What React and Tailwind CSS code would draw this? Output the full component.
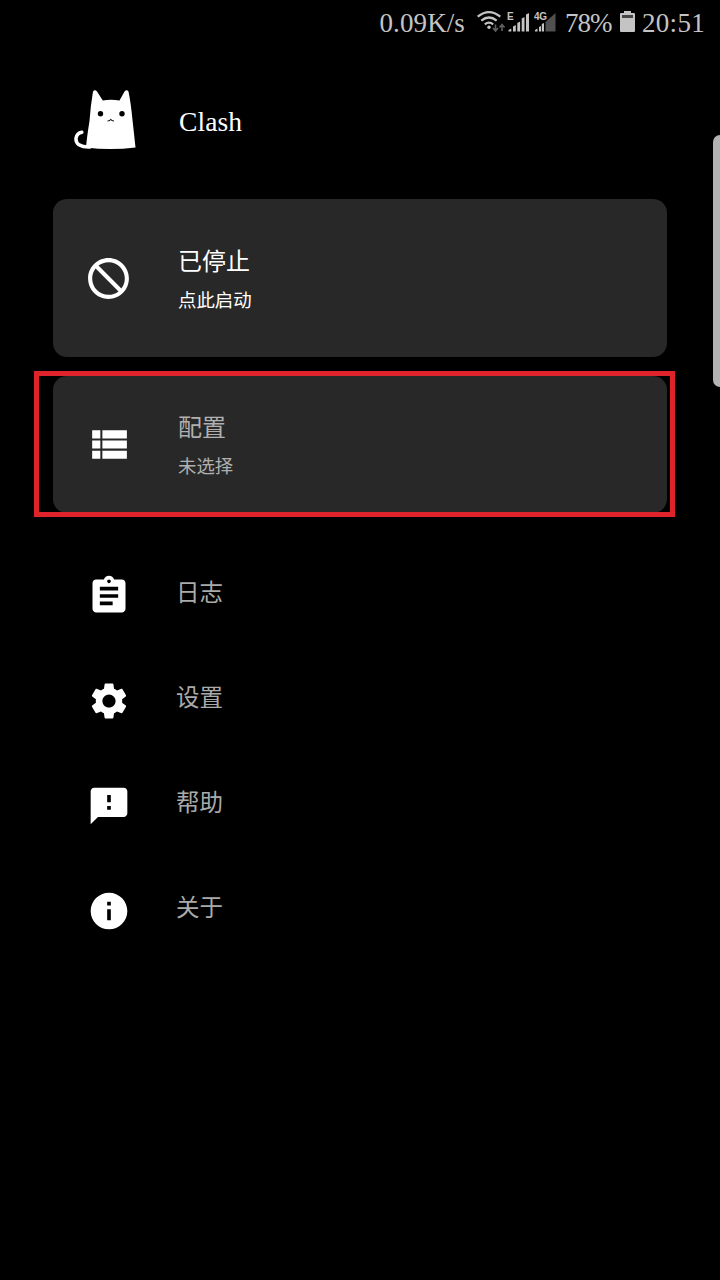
import React from 'react';

const SERIF = "font-['Liberation_Serif','Noto_Sans_CJK_SC',serif]";

function Icon({ d, className }) {
  return (
    <svg viewBox="0 0 24 24" fill="currentColor" fillRule="evenodd" className={className}>
      <path d={d} />
    </svg>
  );
}

const ICONS = {
  block: 'M12 2C6.48 2 2 6.48 2 12s4.48 10 10 10 10-4.48 10-10S17.52 2 12 2zM20 12c0-4.42-3.58-8-8-8-1.85 0-3.55.63-4.9 1.69L18.31 16.9C19.37 15.55 20 13.85 20 12zm-8 8c1.85 0 3.55-.63 4.9-1.69L5.69 7.1C4.63 8.45 4 10.15 4 12c0 4.42 3.58 8 8 8z',
  list: 'M4 14h4v-4H4v4zm0 5h4v-4H4v4zM4 9h4V5H4v4zm5 5h12v-4H9v4zm0 5h12v-4H9v4zM9 5v4h12V5H9z',
  logs: 'M19 3h-4.18C14.4 1.84 13.3 1 12 1c-1.3 0-2.4.84-2.82 2H5c-1.1 0-2 .9-2 2v14c0 1.1.9 2 2 2h14c1.1 0 2-.9 2-2V5c0-1.1-.9-2-2-2zm-7 0c.55 0 1 .45 1 1s-.45 1-1 1-1-.45-1-1 .45-1 1-1zm2 14H7v-2h7v2zm3-4H7v-2h10v2zm0-4H7V7h10v2z',
  settings: 'M19.14 12.94c.04-.3.06-.61.06-.94 0-.32-.02-.64-.07-.94l2.03-1.58c.18-.14.23-.41.12-.61l-1.92-3.32c-.12-.22-.37-.29-.59-.22l-2.39.96c-.5-.38-1.03-.7-1.62-.94l-.36-2.54c-.04-.24-.24-.41-.48-.41h-3.84c-.24 0-.43.17-.47.41l-.36 2.54c-.59.24-1.13.57-1.62.94l-2.39-.96c-.22-.08-.47 0-.59.22L2.74 8.87c-.12.21-.08.47.12.61l2.03 1.58c-.05.3-.09.63-.09.94s.02.64.07.94l-2.03 1.58c-.18.14-.23.41-.12.61l1.92 3.32c.12.22.37.29.59.22l2.39-.96c.5.38 1.03.7 1.62.94l.36 2.54c.05.24.24.41.48.41h3.84c.24 0 .44-.17.47-.41l.36-2.54c.59-.24 1.13-.56 1.62-.94l2.39.96c.22.08.47 0 .59-.22l1.92-3.32c.12-.22.07-.47-.12-.61l-2.01-1.58zM12 15.6c-1.98 0-3.6-1.62-3.6-3.6s1.62-3.6 3.6-3.6 3.6 1.62 3.6 3.6-1.62 3.6-3.6 3.6z',
  help: 'M20 2H4c-1.1 0-1.99.9-1.99 2L2 22l4-4h14c1.1 0 2-.9 2-2V4c0-1.1-.9-2-2-2zm-7 12h-2v-2h2v2zm0-4h-2V6h2v4z',
  about: 'M12 2C6.48 2 2 6.48 2 12s4.48 10 10 10 10-4.48 10-10S17.52 2 12 2zm1 15h-2v-6h2v6zm0-8h-2V7h2v2z',
};

const MENU = [
  { icon: 'logs', label: '日志' },
  { icon: 'settings', label: '设置' },
  { icon: 'help', label: '帮助' },
  { icon: 'about', label: '关于' },
];

function StatusBar() {
  return (
    <div className="flex h-[45px] items-center justify-end pr-[15px] text-[27px] leading-none text-[#c4c4c4]">
      <span className="pt-px tracking-[0.1px]">0.09K/s</span>
      <svg viewBox="0 0 29 24" className="ml-[12px] h-6 w-[29px] -translate-y-px" fill="none">
        <g stroke="#c4c4c4" strokeWidth="2.2">
          <path d="M.7 6.7Q12-2.3 23.3 6.7" />
          <path d="M4.3 10.6Q12 4.4 19.7 10.6" />
          <path d="M7.8 14.3Q12 11 16.2 14.3" />
        </g>
        <circle cx="12" cy="17.300" r="1.7" fill="#c4c4c4" />
        <g stroke="#5f5f5f" strokeWidth="1.6">
          <path d="M18.500 14.500v6M16 18l2.500 3 2.500-3" />
          <path d="M25 21v-6M22.500 17.500l2.500-3 2.500 3" />
        </g>
      </svg>
      <svg viewBox="0 0 52 24" className="h-6 w-[52px]">
        <text x="1" y="9" className="font-['Liberation_Sans',sans-serif] text-[10px] font-bold" fill="#c4c4c4">E</text>
        <path fill="#c4c4c4" d="M2.500 20.500v-1.500l2.800-1.500v3zM7 20.500v-5l2.800-1.500v6.500zM11.300 20.500v-8.500l2.800-1.500v10zM15.700 20.500V7.500l2.800-1.500v14.500zM20 20.500V3.500l3-1.500v18.500z" />
        <text x="28" y="9" className="font-['Liberation_Sans',sans-serif] text-[10px] font-bold" textLength="13" fill="#c4c4c4">4G</text>
        <path fill="#c4c4c4" d="M29 20.500v-1.500l2.500-1.500v3zM33 20.500v-4.500l2-1v5.500zM35.800 20.500v-7.500l2.200-1v8.500z" />
        <path fill="#505050" d="M39.500 20.500V11l10-9v18.500z" />
      </svg>
      <span className="ml-[7px] w-[48px] pt-px tracking-[-1px]">78%</span>
      <svg viewBox="0 0 15 22" className="ml-[7px] h-[22px] w-[15px] -translate-y-px">
        <path fill="#c4c4c4" d="M4 0h7v2h3q1 0 1 1v17q0 1-1 1H1q-1 0-1-1V3q0-1 1-1h3z" />
        <path fill="#454545" d="M2 4h11v3H2z" />
      </svg>
      <span className="ml-[7px] pt-px tracking-[0.3px]">20:51</span>
    </div>
  );
}

function CatLogo() {
  return (
    <svg viewBox="0 0 62 60" className="h-[60px] w-[62px]">
      <path fill="none" stroke="#fff" strokeWidth="3.5" strokeLinecap="round" d="M7.800 42.300C1.500 43.500 0 51 5 54.800Q9 57.300 16 57" />
      <path fill="#fff" d="M19 1.500Q21-1 23 1.500L28.800 10.500Q36.500 9 45.500 10.500L50.500 1.500Q52.800-1 54.500 1.500Q57 14 58.500 30L61.500 57.500Q36 60.500 12 57.500Q13 46 15.500 31Q16.500 16 19 1.500Z" />
      <circle cx="26.500" cy="23.800" r="2.700" />
      <circle cx="48" cy="23.800" r="2.700" />
      <path fill="none" stroke="#000" strokeWidth="1.1" d="M33.500 31Q35.500 31 36.800 29.500Q38 31 40 31" />
    </svg>
  );
}

function Card({ icon, title, subtitle, className, textClass }) {
  return (
    <button className={`flex w-full items-center bg-[#282828] text-left ${className}`}>
      <Icon d={ICONS[icon]} className="size-[49px] text-white" />
      <span className={`ml-[45px] flex flex-col pt-[7px] ${textClass}`}>
        <span className="text-[24px] leading-[39px]">{title}</span>
        <span className="text-[18.4px] leading-[38px]">{subtitle}</span>
      </span>
    </button>
  );
}

export default function App() {
  return (
    <div className={`relative h-[1280px] w-[720px] overflow-hidden bg-black ${SERIF}`}>
      <StatusBar />
      <header className="flex h-[154px] items-center pb-[4px] pl-[74px]">
        <CatLogo />
        <h1 className="ml-[43px] pt-[4px] text-[27.5px] leading-none tracking-[0.1px] text-white">Clash</h1>
      </header>
      <main className="px-[53px]">
        <Card icon="block" title="已停止" subtitle="点此启动" className="h-[158px] rounded-[14px] pl-[31px]" textClass="text-white" />
        <div className="relative mt-[19px]">
          <Card icon="list" title="配置" subtitle="未选择" className="h-[137px] rounded-[14px] pb-px pl-[31px]" textClass="text-[#b0b0b0]" />
          <div className="pointer-events-none absolute -top-[5px] -left-[19px] h-[146px] w-[641px] border-[5px] border-[#de232b]" />
        </div>
        <nav className="mt-[30px] flex flex-col">
          {MENU.map(({ icon, label }) => (
            <button key={icon} className="flex h-[105px] items-center pl-[34px] text-left">
              <Icon d={ICONS[icon]} className="size-[44px] text-white" />
              <span className="ml-[45px] pb-[5px] text-[23.5px] leading-[34px] text-[#aaaaaa]">{label}</span>
            </button>
          ))}
        </nav>
      </main>
      <div className="absolute top-[135px] right-0 h-[252px] w-[7px] rounded-l-[7px] bg-[#b3b3b3]" />
    </div>
  );
}
